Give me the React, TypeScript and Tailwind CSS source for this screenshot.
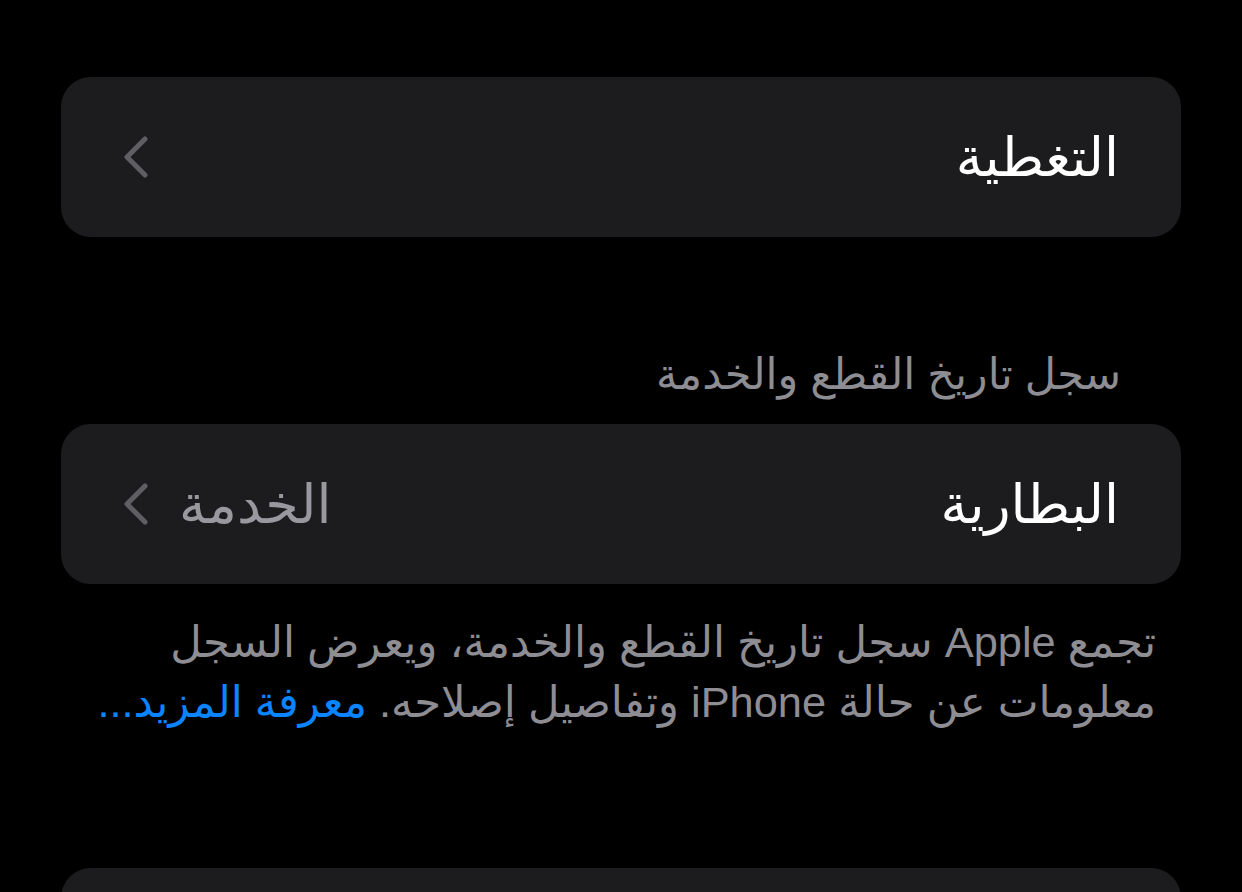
import React from "react";

function Chevron() {
  return (
    <svg width="26" height="42" viewBox="0 0 26 42" fill="none" className="shrink-0">
      <path d="M22 3 L4 21 L22 39" stroke="#5e5e63" strokeWidth="5" strokeLinecap="round" strokeLinejoin="round" />
    </svg>
  );
}

type RowProps = { title: string; value?: string };

function Row({ title, value }: RowProps) {
  return (
    <div className="flex h-[160px] items-center justify-between rounded-[30px] bg-[#1c1c1e] pl-[62px] pr-[62px]">
      <span className="text-[54px] leading-none text-white">{title}</span>
      <div className="flex items-center gap-[30px]">
        {value && <span className="text-[54px] leading-none text-[#98989e]">{value}</span>}
        <Chevron />
      </div>
    </div>
  );
}

export default function App() {
  return (
    <div
      dir="rtl"
      className="h-[892px] overflow-hidden bg-black px-[61px] pt-[77px]"
      style={{ fontFamily: '"Liberation Sans", "DejaVu Sans", sans-serif' }}
    >
      <Row title="التغطية" />

      <p className="mt-[112px] h-[50px] whitespace-nowrap pr-[60px] text-[43px] leading-[50px] text-[#8d8d93]">
        سجل تاريخ القطع والخدمة
      </p>

      <div className="mt-[25px]">
        <Row title="البطارية" value="الخدمة" />
      </div>

      <p className="mt-[28px] h-[120px] whitespace-nowrap pr-[25px] text-[43.4px] leading-[60px] text-[#8d8d93]">
        تجمع Apple سجل تاريخ القطع والخدمة، ويعرض السجل
        <br />
        معلومات عن حالة iPhone وتفاصيل إصلاحه.{" "}
        <span className="text-[#0a84ff]">معرفة المزيد...</span>
      </p>

      <div className="mt-[136px] h-[160px] rounded-[30px] bg-[#1c1c1e]" />
    </div>
  );
}
